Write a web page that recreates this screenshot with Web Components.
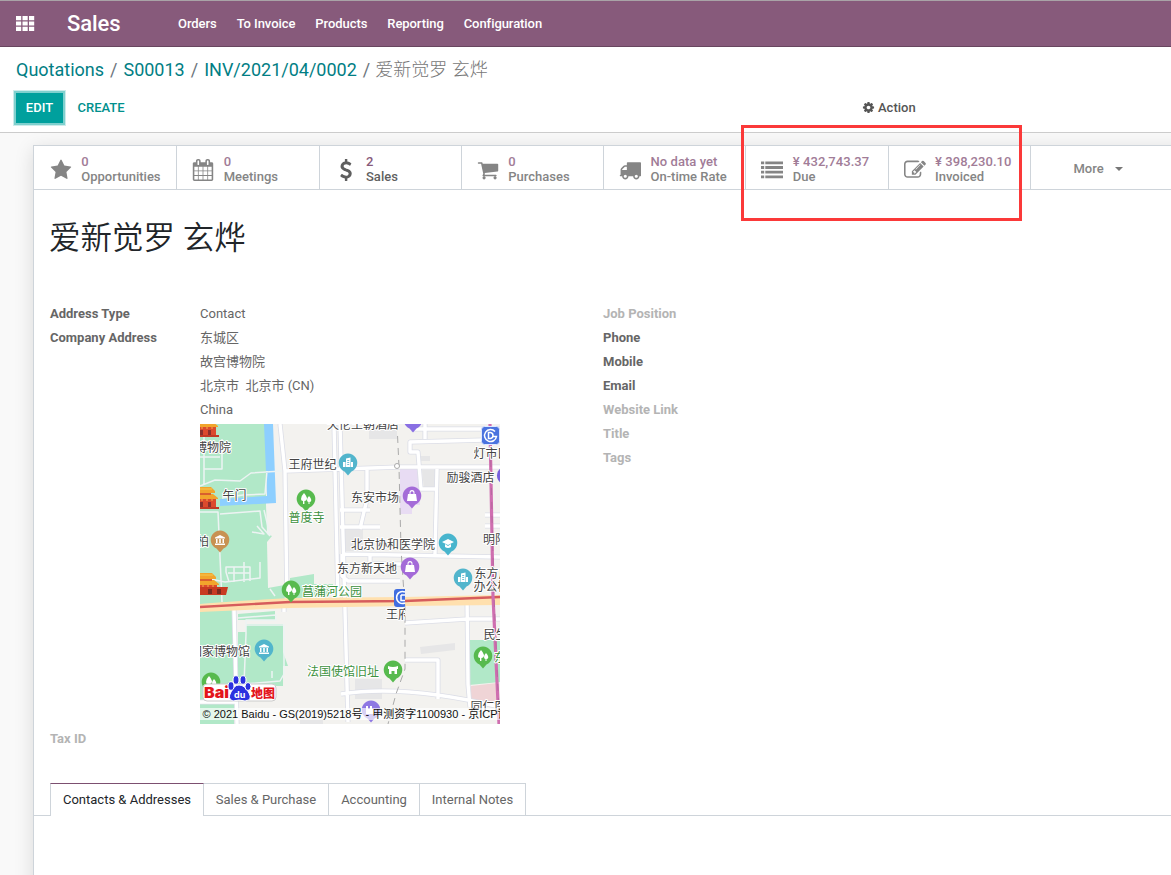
<!DOCTYPE html>
<html lang="en">
<head>
<meta charset="utf-8">
<title>Sales</title>
<style>
html,body{margin:0;height:100%;overflow:hidden}
body{background:#f9f9f9;font:13px/1.5 Roboto,"Noto Sans CJK SC",sans-serif;color:#666}
</style>
</head>
<body>
<sales-page></sales-page>
<script>
const FA = {
  star:'<path d="M1728 647q0 22-26 48l-363 354 86 500q1 7 1 20 0 21-10.5 35.5t-30.5 14.5q-19 0-40-12l-449-236-449 236q-22 12-40 12-21 0-31.5-14.5t-10.5-35.5q0-6 2-20l86-500-364-354q-25-27-25-48 0-37 56-46l502-73 225-455q19-41 49-41t49 41l225 455 502 73q56 9 56 46z"/>',
  calendar:'<path d="M192 1664h288v-288h-288v288zm352 0h320v-288h-320v288zm-352-352h288v-320h-288v320zm352 0h320v-320h-320v320zm-352-384h288v-288h-288v288zm736 736h320v-288h-320v288zm-384-736h320v-288h-320v288zm768 736h288v-288h-288v288zm-384-352h320v-320h-320v320zm-352-864v-288q0-13-9.5-22.5t-22.5-9.5h-64q-13 0-22.5 9.5t-9.5 22.5v288q0 13 9.5 22.5t22.5 9.5h64q13 0 22.5-9.5t9.5-22.5zm736 864h288v-320h-288v320zm-384-384h320v-288h-320v288zm384 0h288v-288h-288v288zm32-480v-288q0-13-9.5-22.5t-22.5-9.5h-64q-13 0-22.5 9.5t-9.5 22.5v288q0 13 9.5 22.5t22.5 9.5h64q13 0 22.5-9.5t9.5-22.5zm384-64v1280q0 52-38 90t-90 38h-1408q-52 0-90-38t-38-90v-1280q0-52 38-90t90-38h128v-96q0-66 47-113t113-47h64q66 0 113 47t47 113v96h384v-96q0-66 47-113t113-47h64q66 0 113 47t47 113v96h128q52 0 90 38t38 90z"/>',
  usd:'<path d="M1362 1185q0 153-99.5 263.5t-258.5 136.5v175q0 14-9 23t-23 9h-135q-13 0-22.5-9.5t-9.5-22.5v-175q-66-9-127.5-31t-101.5-44.5-74-48-46.5-37.5-17.5-18q-17-21-2-41l103-135q7-10 23-12 15-2 24 9l2 2q113 99 243 125 37 8 74 8 81 0 142.5-43t61.5-122q0-28-15-53t-33.5-42-58.5-37.5-66-32-80-32.5q-39-16-61.5-25t-61.5-26.5-62.5-31-56.5-35.5-53.5-42.5-43.5-49-35.5-58-21-66.5-8.5-78q0-138 98-242t255-134v-180q0-13 9.5-22.5t22.5-9.5h135q14 0 23 9t9 23v176q57 6 110.5 23t87 33.5 63.5 37.5 39 29 15 14q17 18 5 38l-81 146q-8 15-23 16-14 3-27-7-3-3-14.5-12t-39-26.5-58.5-32-74.5-26-85.5-11.5q-95 0-155 43t-60 111q0 26 8.5 48t29.5 41.5 39.5 33 56 31 60.5 27 70 27.5q53 20 81 31.5t76 35 75.5 42.5 62 50 53 63.5 31.5 76.5 13 94z"/>',
  cart:'<path d="M704 1536q0 52-38 90t-90 38-90-38-38-90 38-90 90-38 90 38 38 90zm896 0q0 52-38 90t-90 38-90-38-38-90 38-90 90-38 90 38 38 90zm128-1088v512q0 24-16.5 42.5t-40.5 21.5l-1044 122q13 60 13 70 0 16-24 64h920q26 0 45 19t19 45-19 45-45 19h-1024q-26 0-45-19t-19-45q0-11 8-31.5t16-36 21.5-40 15.5-29.5l-177-823h-204q-26 0-45-19t-19-45 19-45 45-19h256q16 0 28.5 6.5t19.5 15.5 13 24.5 8 26 5.5 29.5 4.5 26h1201q26 0 45 19t19 45z"/>',
  truck:'<path d="M640 1408q0-52-38-90t-90-38-90 38-38 90 38 90 90 38 90-38 38-90zm-384-512h384v-256h-158q-13 0-22 9l-195 195q-9 9-9 22v30zm1280 512q0-52-38-90t-90-38-90 38-38 90 38 90 90 38 90-38 38-90zm256-1088v1024q0 15-4 26.5t-13.5 18.5-16.5 11.5-23.5 6-22.5 2-25.5 0-22.5-.5q0 106-75 181t-181 75-181-75-75-181h-384q0 106-75 181t-181 75-181-75-75-181h-64q-3 0-22.5.5t-25.5 0-22.5-2-23.5-6-16.5-11.5-13.5-18.5-4-26.5q0-26 19-45t45-19v-320q0-8-.5-35t0-38 2.5-34.5 6.5-37 14-30.5 22.5-30l198-198q19-19 50.5-32t58.5-13h160v-192q0-26 19-45t45-19h1024q26 0 45 19t19 45z"/>',
  list:'<path d="M0 200h260v230H0zM0 580h260v230H0zM0 960h260v230H0zM0 1340h260v230H0zM350 200h1442v230H350zM350 580h1442v230H350zM350 960h1442v230H350zM350 1340h1442v230H350z"/>',
  edit:'<path d="M888 1184l116-116-152-152-116 116v56h96v96h56zm440-720q-16-16-33 1l-350 350q-17 17-1 33t33-1l350-350q17-17 1-33zm80 594v190q0 119-84.5 203.5t-203.5 84.5h-832q-119 0-203.5-84.5t-84.5-203.5v-832q0-119 84.5-203.5t203.5-84.5h832q63 0 117 25 15 7 18 23 3 17-9 29l-49 49q-14 14-32 8-23-6-45-6h-832q-66 0-113 47t-47 113v832q0 66 47 113t113 47h832q66 0 113-47t47-113v-126q0-13 9-22l64-64q15-15 35-7t20 29zm-96-738l288 288-672 672h-288v-288zm444 132l-92 92-288-288 92-92q28-28 68-28t68 28l152 152q28 28 28 68t-28 68z"/>',
  cog:'<path d="M1152 896q0-106-75-181t-181-75-181 75-75 181 75 181 181 75 181-75 75-181zm512-109v222q0 12-8 23t-20 13l-185 28q-19 54-39 91 35 50 107 138 10 12 10 25t-9 23q-27 37-99 108t-94 71q-12 0-26-9l-138-108q-44 23-91 38-16 136-29 186-7 28-36 28h-222q-14 0-24.5-8.5t-11.5-21.5l-28-184q-49-16-90-37l-141 107q-10 9-25 9-14 0-25-11-126-114-165-168-7-10-7-23 0-12 8-23 15-21 51-66.5t54-70.5q-27-50-41-99l-183-27q-13-2-21-12.5t-8-23.5v-222q0-12 8-23t19-13l186-28q14-46 39-92-40-57-107-138-10-12-10-24 0-10 9-23 26-36 98.5-107.5t94.5-71.5q13 0 26 10l138 107q44-23 91-38 16-136 29-186 7-28 36-28h222q14 0 24.5 8.5t11.5 21.5l28 184q49 16 90 37l142-107q9-9 24-9 13 0 25 10 129 119 165 170 7 8 7 22 0 12-8 23-15 21-51 66.5t-54 70.5q26 50 41 98l183 28q13 2 21 12.5t8 23.5z"/>'
};
function define(name, html) {
  customElements.define(name, class extends HTMLElement {
    constructor() { super(); this.attachShadow({mode:'open'}); }
    connectedCallback() {
      this.shadowRoot.innerHTML = typeof html === 'function' ? html(this) : html;
    }
  });
}

define('fa-icon', el => `<style>:host{display:block;flex:none;width:var(--s,21px);height:var(--s,21px)}svg{display:block;width:100%;height:100%;fill:currentColor}</style><svg viewBox="0 0 1792 1792">${FA[el.getAttribute('name')]}</svg>`);

define('nav-bar', `<style>
:host{display:flex;box-sizing:border-box;height:47px;background:#875a7b;border-top:1px solid #a9a3a7;border-bottom:1px solid #68465f;color:#fff;align-items:center;padding-left:16px}
svg{width:19px;height:15px;fill:#fff;flex:none}
h1{margin:0 0 0 32px;font:500 22px/44px Roboto;width:111px;letter-spacing:-.1px}
nav{display:flex;gap:20px;font-weight:500;letter-spacing:-.065px}
</style>
<svg viewBox="0 0 19 15"><path d="M0 0h5.200v4.200H0zM6.500 0h5.200v4.200h-5.200zM13 0h5.200v4.200h-5.200zM0 5.400h5.200v4.200H0zM6.500 5.400h5.200v4.200h-5.200zM13 5.400h5.200v4.200h-5.200zM0 10.800h5.200V15H0zM6.500 10.800h5.200V15h-5.200zM13 10.800h5.200V15h-5.200z"/></svg>
<h1>Sales</h1><nav><slot></slot></nav>`);

define('control-panel', `<style>
:host{display:flex;flex-direction:column;box-sizing:border-box;height:86px;background:#fff;border-bottom:1px solid #ccc;padding:9px 16px 0 16px}
.crumbs{display:flex;height:27px;line-height:27px;font-size:18px;white-space:pre;color:#888}
.crumbs a{color:#017e84}.crumbs span{font-weight:300;color:#777}.crumbs i{font-style:normal;padding:0 6px;color:#6c757d}
.crumbs i:last-of-type{padding-right:5px}
.bar{display:flex;align-items:center;margin-top:9px;height:31px;font-weight:500}
.edit{background:#00a09d;color:#fff;height:30px;line-height:29px;width:47px;text-align:center;box-shadow:0 0 0 2px #7fd0ce,0 0 0 3px #cdeceb}
.create{color:#00908d;margin-left:14.500px;width:784.500px}
.action{display:flex;align-items:center;gap:3px;color:#555}
fa-icon{--s:13px}
</style>
<div class="crumbs"><a>Quotations</a><i>/</i><a>S00013</a><i>/</i><a>INV/2021/04/0002</a><i>/</i><span>爱新觉罗 玄烨</span></div>
<div class="bar"><div class="edit">EDIT</div><div class="create">CREATE</div><div class="action"><fa-icon name="cog"></fa-icon>Action</div></div>`);

define('stat-button', el => `<style>
:host{display:flex;box-sizing:border-box;width:142.250px;flex:none;height:43px;border-right:1px solid #ced4da;padding-left:15px;align-items:center;gap:9.500px;color:#858585;font-weight:500;line-height:15px;white-space:nowrap}
:host(:first-child){width:143.250px;padding-left:16px;gap:9.300px}
:host([active]){color:#5f5f5f}
b{display:block;font-weight:500;color:#a17c97;letter-spacing:.06px}
:host([active]) b{color:#875a7b}
div{padding-top:2px}
fa-icon{--s:22px;margin-top:4px}
</style><fa-icon name="${el.getAttribute('icon')}"></fa-icon><div><b>${el.getAttribute('value')}</b><slot></slot></div>`);

define('field-row', el => `<style>
:host{display:flex;line-height:24px;min-height:24px}
label{width:150px;flex:none;font-weight:700;color:#666}
:host([muted]) label{color:#b4b4b4}
div{color:#666}
</style><label>${el.getAttribute('label')||''}</label><div><slot></slot></div>`);

define('note-tabs', `<style>
:host{display:flex;border-bottom:1px solid #ced4da;padding-left:16px;height:32px}
span{box-sizing:border-box;height:32px;line-height:32px;border:1px solid #ced4da;border-left:0;border-bottom:0;text-align:center;color:#666}
.on{height:33px;background:#fff;color:#212529;border-left:1px solid #ced4da;border-top-color:#7c4f70;width:154px}
</style><span class="on">Contacts &amp; Addresses</span><span style="width:125px">Sales &amp; Purchase</span><span style="width:91px">Accounting</span><span style="width:106px">Internal Notes</span>`);

const pin = (x,y,c,g) => `<g transform="translate(${x} ${y})"><path d="M0 12.500L-3.500 8.500A9.300 9.300 0 1 1 3.500 8.500Z" fill="${c}"/><g fill="#fff">${g}</g></g>`;
const tree = '<path d="M-2-6Q-5-3-5 0-5 2-3 2V5H-1.600V2Q1 2 1-1 0-4-2-6Z"/><path d="M3-3Q1-1 1 1 1 3 2.500 3V5H3.500V3Q5.500 3 5.300 1 5-1 3-3Z"/>';
const bag = '<path d="M-4-2h8l1 7H-5ZM-2.500-2v-1.500a2.500 2.500 0 0 1 5 0V-2h-1v-1.300a1.500 1.500 0 0 0-3 0V-2Z"/>';
const office = '<path d="M-2-4.500L2.500-5.500V4H-2ZM-5-1H-2.500V4H-5ZM3-1H5V4H3Z"/><path d="M-.8-2.500h2M-.8-.5h2M-.8 1.500h2" stroke="#52b5cc" stroke-width=".8"/>';
const museum = '<path d="M0-5L5-2.500V-1.500H-5V-2.500ZM-4-1h1.500v4H-4ZM-.8-1H.8v4H-.8ZM2.500-1H4v4H2.500ZM-5 3.500H5V5H-5Z"/>';
const gate = (x,y) => `<g transform="translate(${x} ${y})"><path d="M-12-7L-10-11H9L13-7V-5H-12ZM-12-1L-9-4H11L16 0V1H-12Z" fill="#f2a52c"/><path d="M-12-5H9V-3H-12Z" fill="#d9602e"/><path d="M-12 1H14V9H-12Z" fill="#dc4a2d"/><path d="M-12 9H17V11H-12Z" fill="#c23a26"/><path d="M-2 4h3v5h-3M6 4h3v5H6" fill="#8b302c"/><path d="M-12-9H10" stroke="#f6c94f"/><path d="M-10 1v3M-5 1v3M0 1v2M5 1v2M10 1v2" stroke="#f3b04b"/></g>`;
const roads = 'M80 0L85 47 87 176M134 0L138 176M140 0L148 298M34 185L37 300M84 177V188M0 278H38M85 47L200 43H300M140 86H170M140 103H180M167 45V75L160 105M145 130L300 133M211 5H300M225 0V15M285 16L210 18V28H218L221 65H236M237 45L235 130M142 130V152L148 157H200M170 130V140H205M141 270Q205 260 300 283M205 199L267 195M267 172L268 260L270 283M205 236H238V275M267 195H300M285 91H300M285 102H300';

define('street-map', `<style>
:host{display:block;width:300px;height:300px}svg{display:block;font:12px "Noto Sans CJK SC",sans-serif}
.t text{fill:#444;stroke:#fff;stroke-width:2px;paint-order:stroke;stroke-linejoin:round}.t .g{fill:#3d9140}
</style>
<svg width="300" height="300" viewBox="0 0 300 300">
<rect width="300" height="300" fill="#f3f2ef"/>
<g fill="#b1e8c8">
<path d="M0 0H66V81L67 110 72 112 67 118 68 164 90 160V154L114 150V160H133V170Q60 180 0 180ZM0 185H34V300H0ZM38 190L75 187V196H38ZM46 200H83V262H38V208H46ZM83 228l5 14h-5zM269 216h32v42l-32 3z"/></g>
<path d="M64 0H73L76 79 20 82V75L67 72Z" fill="#8dcfff"/>
<path d="M200 45h20v36h-8v9h-12z" fill="#e8dcf3"/>
<g fill="#e6e6e7"><path d="M169 5h28v10h-28zM220 32h10v5h-10zM222 46h14v19h-12zM145 105h18v22h-18zM220 223l35-4v7l-34 4zM155 255h27v20h-27zM100 286h23v14h-23z"/></g>
<path d="M271 262l26-3v21h-26z" fill="#efd4d6"/>
<g fill="none" stroke-linejoin="round"><path d="${roads}" stroke="#dcdee7" stroke-width="5"/><path d="${roads}" stroke="#fff" stroke-width="3.400"/>
<g stroke="#edf3f3" stroke-width="1.500"><path d="M0 62L15 56 40 57 51 49 82 47M4 0V60M0 33H20M22 15V45H4M67 47L65 70 43 71 22 74M0 88H18L22 178M20 90L60 87 62 103 70 112M52 108L64 110 57 102M64 86L70 111M29 158L26 148V143H50V157M28 149H50M34 143V158M44 138V158M60 138V154L25 158M0 153L25 158M38 194L76 191V196H46V210L44 260L80 257 84 250V201H46M72 247V254M75 172L70 165"/></g>
</g>
<path d="M0 180Q55 176 90 174L205 173 300 171V181L205 182 90 184 0 188Z" fill="#ffe0ae"/>
<path d="M0 183Q55 180 90 178L205 177 300 173" fill="none" stroke="#d65c5c" stroke-width="2.400"/>
<path d="M290 0L293 172 299 300" fill="none" stroke="#cf6fb0" stroke-width="3.200"/><path d="M290 8L294 172 299 290" fill="none" stroke="#b868a0" stroke-dasharray="7 7"/>
<path d="M197 0L199 43 201 125 205 185V245L196 270 188 300" fill="none" stroke="#aaa" stroke-dasharray="7 5"/><circle cx="197" cy="42" r="2.500" fill="#fff" stroke="#aaa"/>
${gate(2,2)}${gate(2,74)}${gate(3,160)}<path d="M0 163H28L26 171H0Z" fill="#c83b22"/><path d="M8 165h4v5H8M17 165h4v5h-4" fill="#7c2b20"/>
${pin(148,39,'#52b5cc',office)}${pin(106,75,'#57ba4e',tree)}${pin(20,116,'#c89252',museum)}
${pin(212,72,'#a46bd8',bag)}${pin(248,119,'#48b5cd','<path d="M0-4L6-1 0 2-6-1ZM-3 1L0 3 3 1V4Q0 6-3 4Z"/>')}${pin(210,143,'#a46bd8',bag)}
${pin(263,154,'#52b5cc',office)}${pin(91,166,'#57ba4e',tree)}${pin(64,225,'#52b5cc',museum)}
${pin(193,246,'#57ba4e','<path d="M-5-4Q0-2 5-4V-1H4V4H1.500V1H-1.500V4H-4V-1H-5Z"/>')}${pin(283,232,'#57ba4e',tree)}${pin(11,258,'#57ba4e',tree)}
${pin(213,-4,'#896fe3','<path d="M-4-1h8v4h-8z"/>')}${pin(171,286,'#8e78e3','<path d="M-5-4h2v3h2v-3h2v3h3v5h-9z"/>')}
<path d="M301 44a9 9 0 0 0 0 15" fill="#7861de"/>
<rect x="281.500" y="2.500" width="18" height="18" rx="3" fill="#4a73df" stroke="#dfe8ff"/><g fill="none" stroke="#fff" stroke-width="1.500"><path d="M295 7.500A6 6 0 1 0 296.500 12.500H292M288.500 8.500v6h2q2.500-.5 2.500-3t-2.500-3z"/></g>
<path d="M205 165h-8q-3 0-3 3v12q0 3 3 3h8z" fill="#416ee0"/><path d="M205 168a6 6 0 1 0 0 11M201 171v5.500h4M201 171h4" fill="none" stroke="#fff" stroke-width="1.500"/>
<g class="t"><text x="127" y="5">天伦王朝酒店</text><text x="-5" y="28">博物院</text><text x="88.500" y="45">王府世纪</text><text x="273.500" y="34">灯市口</text><text x="246.500" y="58">励骏酒店</text><text x="22.500" y="76">午门</text><text x="151" y="78">东安市场</text><text class="g" x="88.500" y="98">普度寺</text><text x="-3" y="122">柏</text><text x="151" y="125">北京协和医学院</text><text x="283" y="120">明阳</text><text x="137" y="149">东方新天地</text><text x="274.500" y="154">东方广</text><text x="273.500" y="167">办公楼</text><text class="g" x="102" y="172">菖蒲河公园</text><svg x="180" y="180" width="25" height="20"><text x="6" y="15">王府井</text></svg><text x="-10" y="231.500">国家博物馆</text><text class="g" x="107" y="252">法国使馆旧址</text><text x="283.500" y="214.500">民生</text><text class="g" x="294" y="238">东</text><text x="270.500" y="287">同仁医</text></g>
<rect x="3" y="260" width="73" height="17" rx="4" fill="#fff" stroke="#ccc"/>
<g font-family="Inter,sans-serif" font-weight="900" font-size="15"><text x="4" y="274" fill="#e3161c" textLength="25" lengthAdjust="spacingAndGlyphs">Bai</text><g fill="#2b31df" stroke="#fff" stroke-width="1"><path d="M39 261q-5 0-8 7-4 7 2 9 6-2 12 0 8-1 4-8-4-8-10-8z"/><ellipse cx="31" cy="262" rx="3" ry="4.300"/><ellipse cx="36" cy="256" rx="3" ry="4.300"/><ellipse cx="43" cy="256" rx="3" ry="4.300"/><ellipse cx="48" cy="262.500" rx="3" ry="4"/></g><text x="34" y="274" font-size="9" font-weight="700" fill="#fff">du</text><text x="51" y="273.500" font-family="Noto Sans CJK SC" font-size="12" font-weight="900" fill="#e3161c" textLength="24">地图</text></g>
<rect y="284" width="300" height="12" fill="#fff" opacity=".65"/>
<text x="2.500" y="294" font-family="Liberation Sans,Noto Sans CJK SC" font-size="11" fill="#111" textLength="306">© 2021 Baidu - GS(2019)5218号 - 甲测资字1100930 - 京ICP证</text>
</svg>`);

define('contact-sheet', `<style>
:host{display:flex;flex-direction:column;box-sizing:border-box;margin:12px 0 0 33px;width:1160px;height:760px;background:#fff;border:1px solid #ced4da;box-shadow:0 4px 18px rgba(0,0,0,.13)}
.stats{display:flex;border-bottom:1px solid #ced4da;height:43px}
.more{display:flex;align-items:center;font-weight:500;color:#858585;padding:2px 0 0 42.700px;gap:11px;letter-spacing:.05px}
.more i{border:4px solid transparent;border-top-color:#777;border-bottom:0;margin-top:1px}
h2{margin:26px 0 0 15px;height:46px;font:400 31.500px/46px Roboto,"Noto Sans CJK SC";color:#212529;font-weight:350}
.cols{display:grid;grid-template-columns:553px 1fr;margin:40px 0 0 16px}
street-map{margin:2px 0 3px 150px}
note-tabs{margin-top:32px}
</style>
<div class="stats">
<stat-button icon="star" value="0">Opportunities</stat-button><stat-button icon="calendar" value="0">Meetings</stat-button><stat-button icon="usd" value="2" active>Sales</stat-button><stat-button icon="cart" value="0">Purchases</stat-button><stat-button icon="truck" value="No data yet">On-time Rate</stat-button><stat-button icon="list" value="¥ 432,743.37">Due</stat-button><stat-button icon="edit" value="¥ 398,230.10">Invoiced</stat-button>
<div class="more">More<i></i></div></div>
<h2>爱新觉罗 玄烨</h2>
<div class="cols"><div>
<field-row label="Address Type">Contact</field-row>
<field-row label="Company Address">东城区</field-row><field-row>故宫博物院</field-row><field-row>北京市&nbsp; 北京市 (CN)</field-row><field-row>China</field-row>
<street-map></street-map>
<field-row label="Tax ID" muted></field-row></div>
<div><field-row label="Job Position" muted></field-row><field-row label="Phone"></field-row><field-row label="Mobile"></field-row><field-row label="Email"></field-row><field-row label="Website Link" muted></field-row><field-row label="Title" muted></field-row><field-row label="Tags" muted></field-row></div></div>
<note-tabs></note-tabs>`);

define('sales-page', `<style>
:host{display:block;position:relative;width:1171px;height:875px;overflow:hidden}
main{overflow:hidden;height:742px}
.mark{position:absolute;left:741px;top:125px;width:275px;height:90px;border:3px solid #fb3939}
</style>
<nav-bar><span>Orders</span><span>To Invoice</span><span>Products</span><span>Reporting</span><span>Configuration</span></nav-bar>
<control-panel></control-panel><main><contact-sheet></contact-sheet></main><div class="mark"></div>`);
</script>
</body>
</html>
